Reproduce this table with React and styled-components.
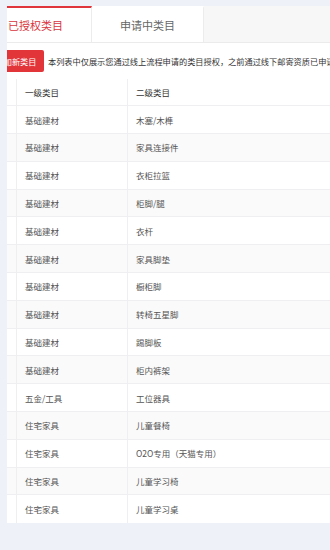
import React, { useEffect, useRef } from "react";
import styled, { createGlobalStyle } from "styled-components";

const GlobalStyle = createGlobalStyle`
  html, body {
    margin: 0;
    padding: 0;
    background: #eef1f8;
    font-family: "Noto Sans CJK SC", "Noto Sans", sans-serif;
  }
`;

const Page = styled.div`
  width: 330px;
  height: 550px;
  padding: 6px 0 0 7px;
  box-sizing: border-box;
  overflow: hidden;
`;

const Panel = styled.div`
  background: #fff;
  overflow: hidden;
  width: 323px;
`;

const Content = styled.div`
  width: 620px;
`;

const TabBar = styled.div`
  display: flex;
  height: 37px;
  background: #f7f7f8;
  border-bottom: 1px solid #ebebeb;
  box-sizing: border-box;
`;

const Tab = styled.div`
  width: 112px;
  display: flex;
  align-items: center;
  justify-content: center;
  background: #fff;
  border-right: 1px solid #ececec;
  border-top: 2px solid ${p => (p.active ? "#e0363b" : "#fff")};
  box-sizing: border-box;
  font-size: 11px;
  color: ${p => (p.active ? "#d9363e" : "#666")};
  padding-bottom: 1px;
`;

const Toolbar = styled.div`
  display: flex;
  align-items: center;
  gap: 4px;
  padding: 7px 0 7px 8px;
`;

const Button = styled.div`
  height: 22px;
  padding: 0 7.5px;
  display: flex;
  align-items: center;
  background: #e2353a;
  color: #fff;
  font-size: 8.2px;
  border-radius: 2px;
  white-space: nowrap;
`;

const Notice = styled.div`
  font-size: 8.2px;
  color: #333;
  white-space: nowrap;
`;

const Table = styled.div`
  margin-left: 8px;
`;

const Row = styled.div`
  display: grid;
  grid-template-columns: 29px 111px 1fr;
  height: ${p => (p.head ? "27.3px" : "27.8px")};
  border-bottom: ${p => (p.last ? "none" : "1px solid #efeff1")};
  box-sizing: border-box;
  background: ${p => (p.striped ? "#fafafa" : "#fff")};
`;

const Cell = styled.div`
  display: flex;
  align-items: center;
  padding-left: 8px;
  border-right: 1px solid #efeff1;
  font-size: 8.5px;
  color: ${p => (p.head ? "#333" : "#555")};
  white-space: nowrap;
  &:last-child {
    border-right: none;
  }
`;

const rows = [
  ["基础建材", "木塞/木榫"],
  ["基础建材", "家具连接件"],
  ["基础建材", "衣柜拉篮"],
  ["基础建材", "柜脚/腿"],
  ["基础建材", "衣杆"],
  ["基础建材", "家具脚垫"],
  ["基础建材", "橱柜脚"],
  ["基础建材", "转椅五星脚"],
  ["基础建材", "踢脚板"],
  ["基础建材", "柜内裤架"],
  ["五金/工具", "工位器具"],
  ["住宅家具", "儿童餐椅"],
  ["住宅家具", "O2O专用（天猫专用）"],
  ["住宅家具", "儿童学习椅"],
  ["住宅家具", "儿童学习桌"]
];

export default function App() {
  const panel = useRef(null);

  useEffect(() => {
    // the list is scrolled sideways in the shot
    if (panel.current) panel.current.scrollLeft = 27;
  }, []);

  return (
    <Page>
      <GlobalStyle />
      <Panel ref={panel}>
        <Content>
          <TabBar>
            <Tab active>已授权类目</Tab>
            <Tab>申请中类目</Tab>
          </TabBar>
          <Toolbar>
            <Button>添加新类目</Button>
            <Notice>
              本列表中仅展示您通过线上流程申请的类目授权，之前通过线下邮寄资质已申请的类目请联系小二处理
            </Notice>
          </Toolbar>
          <Table>
            <Row head>
              <Cell head />
              <Cell head>一级类目</Cell>
              <Cell head>二级类目</Cell>
            </Row>
            {rows.map(([first, second], i) => (
              <Row
                key={i}
                striped={i % 2 === 1}
                last={i === rows.length - 1}
              >
                <Cell />
                <Cell>{first}</Cell>
                <Cell>{second}</Cell>
              </Row>
            ))}
          </Table>
        </Content>
      </Panel>
    </Page>
  );
}
